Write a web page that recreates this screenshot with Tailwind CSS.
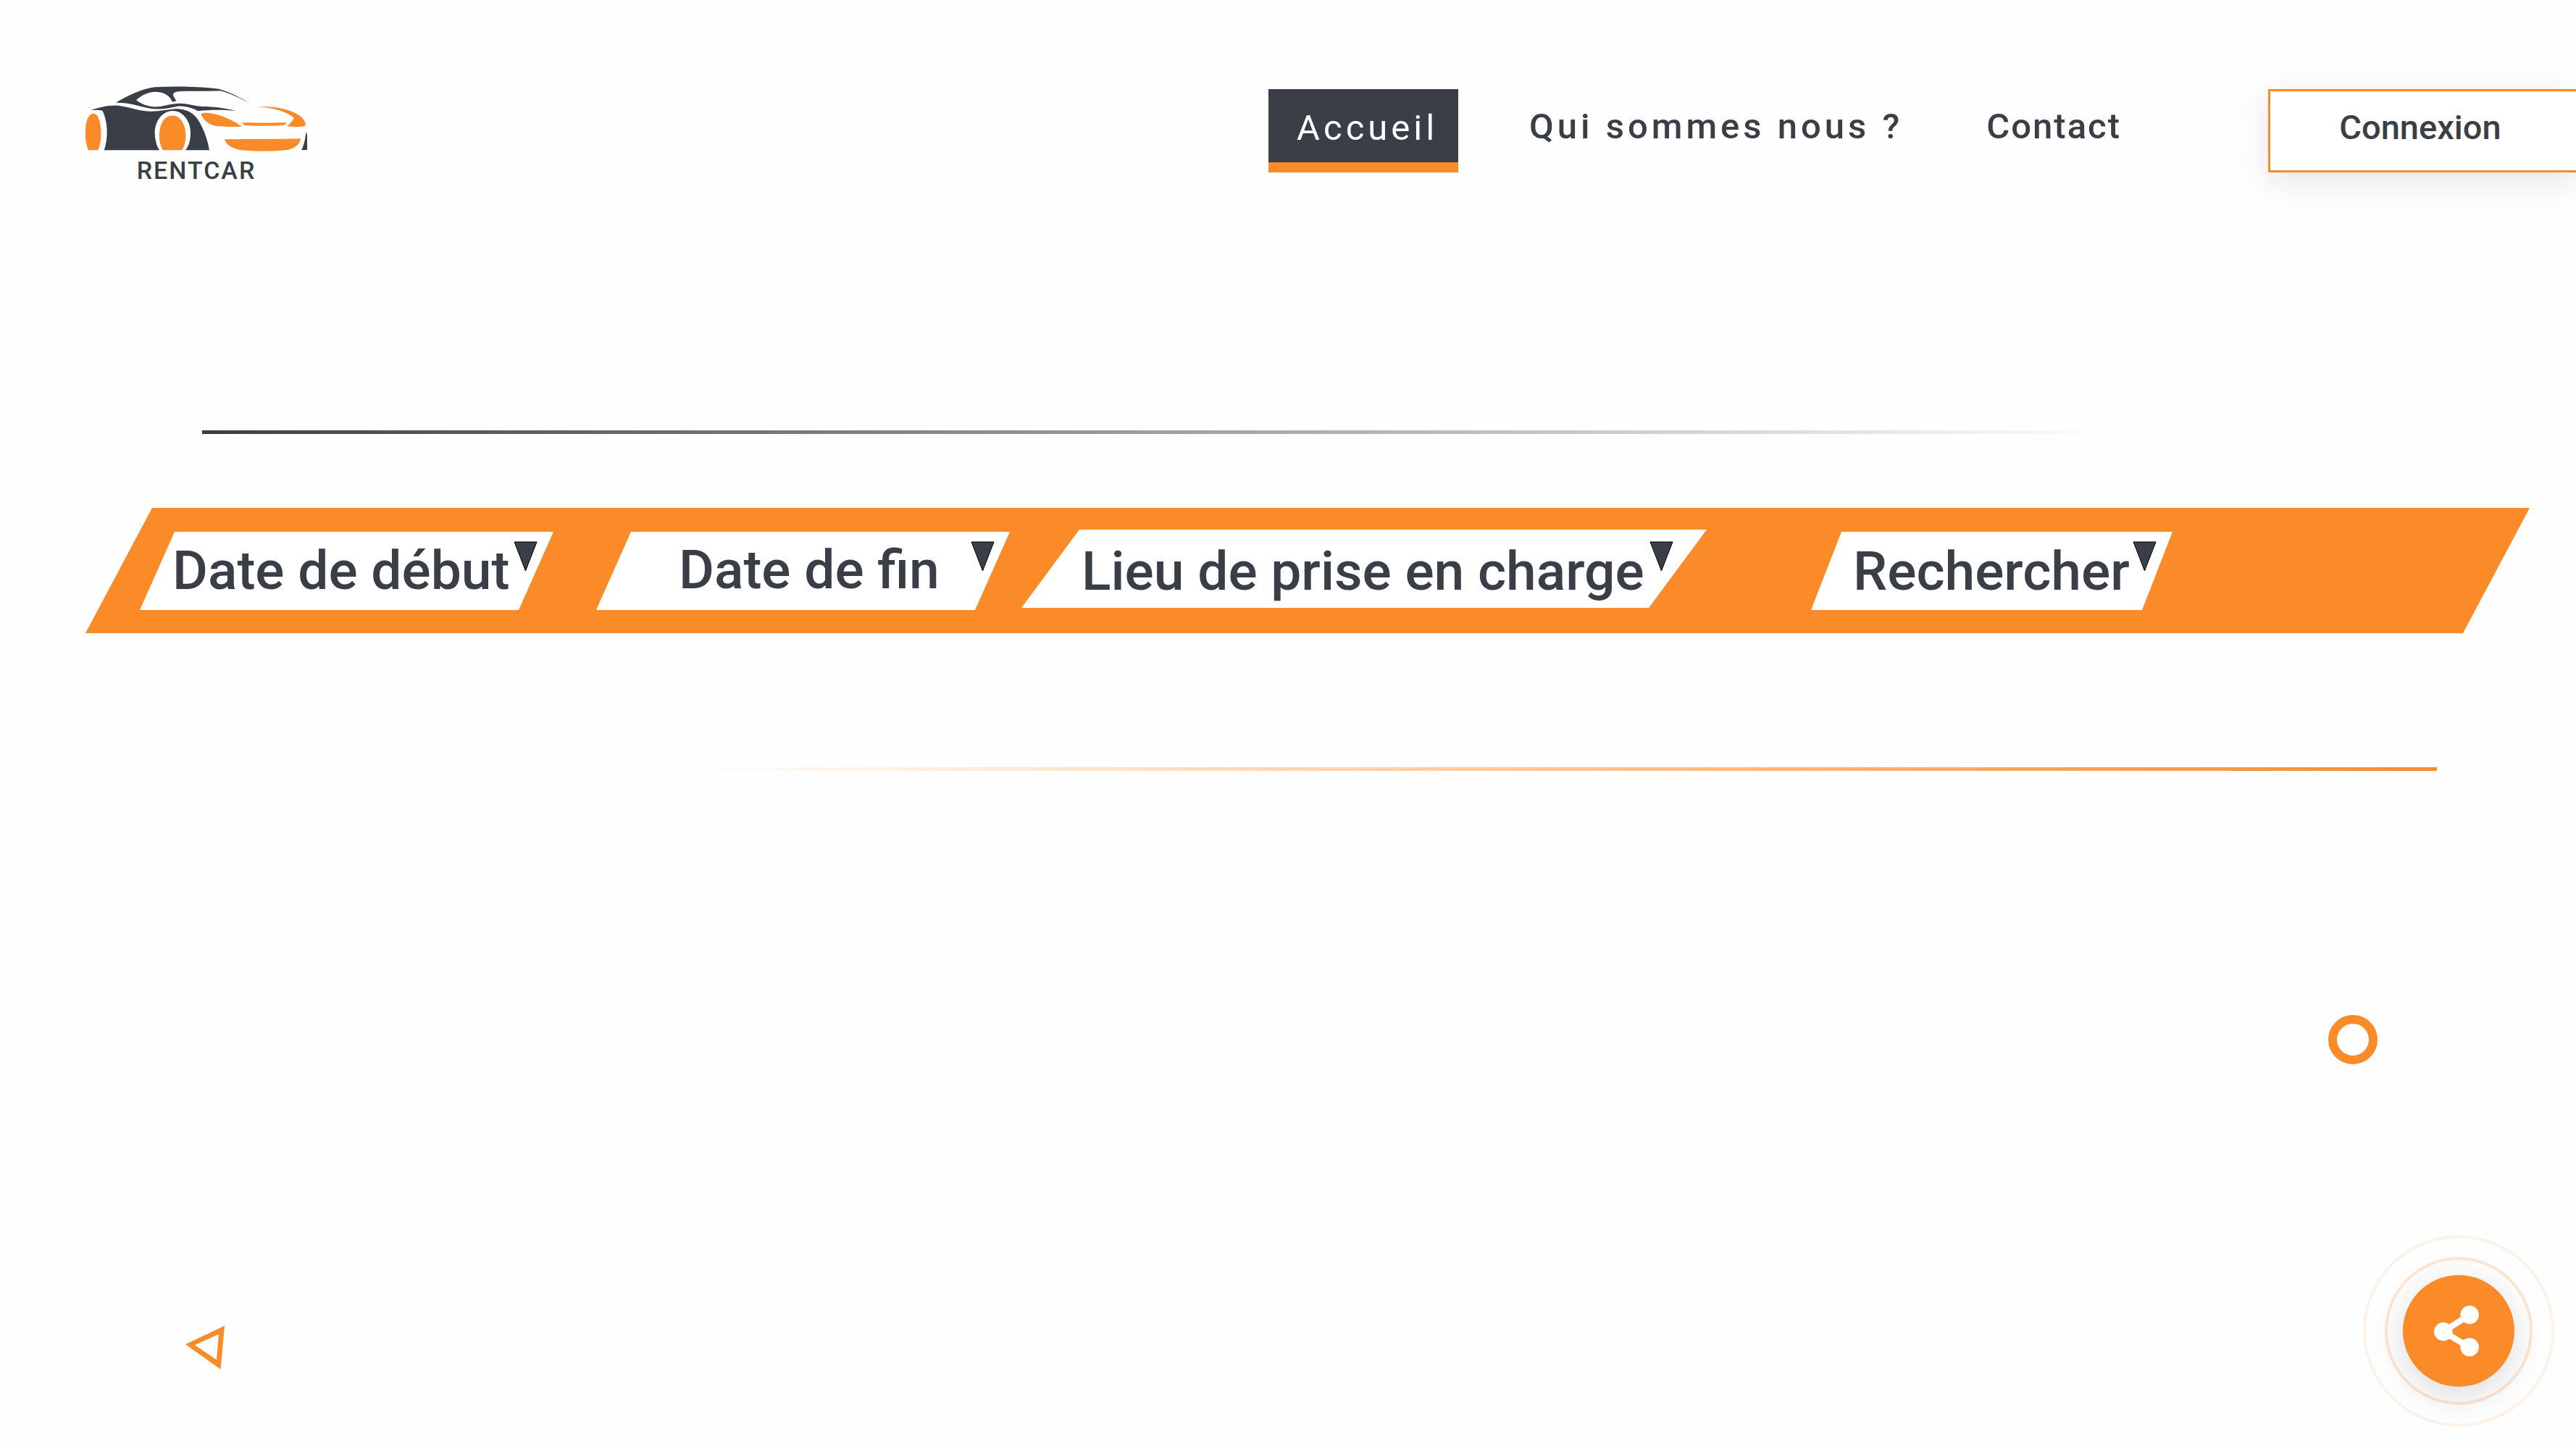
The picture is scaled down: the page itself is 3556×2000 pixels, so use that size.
<!DOCTYPE html>
<html lang="fr">
<head>
<meta charset="utf-8">
<meta name="viewport" content="width=device-width, initial-scale=1">
<title>RentCar</title>
<script src="https://cdn.jsdelivr.net/npm/@tailwindcss/browser@4"></script>
</head>
<body class="relative min-h-screen overflow-x-hidden bg-[#fefefe] font-['Roboto',sans-serif] font-medium text-[#3a3e46]">

<header class="flex items-start justify-between pt-[119px] pl-[118px]">
  <a href="#" class="flex w-[306px] flex-col items-center">
    <svg class="block h-[90px] w-[306px]" viewBox="54 56 918 270" aria-hidden="true">
      <g fill="#3a3e46">
        <path fill-rule="evenodd" d="M180 124C230 94 285 68 340 60C430 54 530 58 607 67C655 82 700 105 732 126C690 104 655 86 612 75C560 78 480 74 440 78C420 80 414 88 418 96L430 117L414 121C406 100 385 80 345 79C310 79 280 98 264 113C285 130 315 143 355 141C385 138 405 128 445 127C480 128 505 138 535 140C590 140 640 148 675 158C620 153 570 153 520 159C495 146 465 136 435 139C400 146 370 153 335 150C290 145 250 124 180 124Z"/>
        <path d="M77 156C110 143 150 134 190 136C240 142 270 158 320 160C360 161 390 153 425 150C470 149 500 165 520 195C545 235 560 280 567 321H468C485 300 489 275 489 248C488 195 455 158 415 158C372 159 341 200 341 250C342 280 349 305 361 321H131C142 290 146 250 141 215C137 190 132 170 124 157C110 154 95 153 77 156Z"/>
        <path d="M967 244L972 258V320H949C959 298 965 275 967 244Z"/>
      </g>
      <g fill="#fb8a29">
        <path d="M66 321C50 285 50 225 62 192C74 163 98 162 108 188C123 225 122 285 106 321Z"/>
        <path d="M375 321C355 290 355 235 372 205C392 168 436 168 456 205C474 235 474 290 453 321Z"/>
        <path d="M533 172C533 164 560 166 585 171C635 182 675 204 702 224C665 224 630 224 596 221C560 214 540 192 533 172Z"/>
        <path d="M702 206C760 208 830 208 887 206L878 217C830 221 760 221 714 218Z"/>
        <path d="M771 140C840 138 905 152 938 176C958 190 967 207 965 219C945 227 915 225 889 222C902 210 912 199 918 187C890 162 835 147 771 140Z"/>
        <path d="M630 276C735 275 840 275 945 273C942 295 925 312 890 320C830 326 760 326 700 321C655 313 638 298 630 276Z"/>
      </g>
    </svg>
    <span class="mt-[6px] text-[34px] leading-[40px] tracking-[2px]">RENTCAR</span>
  </a>

  <nav class="mt-1 flex items-start text-[49px] leading-[56px]">
    <a href="#" class="h-[115px] w-[262px] border-b-[14px] border-[#fb8a29] bg-[#3a3e46] pt-[26px] pl-[39px] font-normal tracking-[5px] text-white">Accueil</a>
    <a href="#" class="mt-6 ml-[98px] tracking-[5px]">Qui sommes nous ?</a>
    <a href="#" class="mt-6 ml-[115px] tracking-[2px]">Contact</a>
    <button type="button" class="ml-[203px] h-[115px] w-[425px] border-[3px] border-r-0 border-[#fb8a29] bg-white pr-[8px] pb-[10px] text-[47px] shadow-[0_12px_48px_rgba(0,0,0,0.1)]">Connexion</button>
  </nav>
</header>

<main>
  <div class="mt-[339px] mr-[18%] ml-[279px] h-[5px] bg-linear-to-r from-[#3a3e46] to-[#3a3e46]/0"></div>

  <form class="mt-[102px] mr-[64px] ml-[118px] flex h-[173px] items-start bg-[#fb8a29] pt-[33px] pl-[75px] text-[75px] leading-[88px] [clip-path:polygon(92px_0,100%_0,calc(100%-92px)_100%,0_100%)]">
    <div class="relative">
      <select aria-label="Date de début" class="block h-[108px] w-[571px] appearance-none bg-white pb-[2px] pl-[45px] [clip-path:polygon(48px_0,100%_0,calc(100%-48px)_100%,0_100%)]"><option>Date de début</option></select>
      <svg class="pointer-events-none absolute top-[13px] right-[22px] h-[44px] w-[33px]" viewBox="0 0 33 44" aria-hidden="true"><path d="M1 1H32L16.500 41Z" fill="#3a3e46" stroke="#000"/></svg>
    </div>
    <div class="relative ml-[59px]">
      <select aria-label="Date de fin" class="block h-[108px] w-[571px] appearance-none bg-white pb-[4px] pl-[114px] [clip-path:polygon(48px_0,100%_0,calc(100%-48px)_100%,0_100%)]"><option>Date de fin</option></select>
      <svg class="pointer-events-none absolute top-[13px] right-[21px] h-[44px] w-[33px]" viewBox="0 0 33 44" aria-hidden="true"><path d="M1 1H32L16.500 41Z" fill="#3a3e46" stroke="#000"/></svg>
    </div>
    <div class="relative -mt-[3px] ml-[16px]">
      <select aria-label="Lieu de prise en charge" class="block h-[108px] w-[946px] appearance-none bg-white pt-[6px] pl-[83px] [clip-path:polygon(80px_0,100%_0,calc(100%-80px)_100%,0_100%)]"><option>Lieu de prise en charge</option></select>
      <svg class="pointer-events-none absolute top-[16px] right-[46px] h-[44px] w-[33px]" viewBox="0 0 33 44" aria-hidden="true"><path d="M1 1H32L16.500 41Z" fill="#3a3e46" stroke="#000"/></svg>
    </div>
    <div class="relative ml-[144px]">
      <button type="submit" class="block h-[108px] w-[499px] bg-white pl-[58px] text-left [clip-path:polygon(42px_0,100%_0,calc(100%-42px)_100%,0_100%)]">Rechercher</button>
      <svg class="pointer-events-none absolute top-[13px] right-[22px] h-[44px] w-[33px]" viewBox="0 0 33 44" aria-hidden="true"><path d="M1 1H32L16.500 41Z" fill="#3a3e46" stroke="#000"/></svg>
    </div>
  </form>

  <div class="mt-[185px] mr-[192px] ml-[27%] h-[5px] bg-linear-to-l from-[#fb8a29] to-[#fb8a29]/0"></div>
</main>

<div class="absolute right-[274px] bottom-[531px] size-[68px] rounded-full border-[12px] border-[#fb8a29]"></div>
<svg class="absolute bottom-[108px] left-[255px] h-[64px] w-[56px]" viewBox="0 0 56 64" aria-hidden="true"><path fill-rule="evenodd" fill="#fb8a29" d="M1 27.500L55 2L49.500 62Z M14 28.500L47 13.500L44 49Z"/></svg>

<div class="absolute right-[30px] bottom-[31px] grid size-[264px] place-items-center rounded-full border-4 border-[#fb8a29]/10">
  <div class="grid size-[204px] place-items-center rounded-full border-4 border-[#fb8a29]/20">
    <button type="button" aria-label="Partager" class="grid size-[154px] place-items-center rounded-full bg-[#fb8a29] pr-[6px] shadow-[0_12px_48px_rgba(0,0,0,0.14)]">
      <svg class="h-[70px] w-[62px]" viewBox="360 365 184 208" aria-hidden="true"><g fill="#fff"><circle cx="398" cy="472" r="38"/><circle cx="506" cy="403" r="38"/><circle cx="506" cy="536" r="38"/></g><path d="M506 403L398 472L506 536" fill="none" stroke="#fff" stroke-width="25"/></svg>
    </button>
  </div>
</div>

</body>
</html>
